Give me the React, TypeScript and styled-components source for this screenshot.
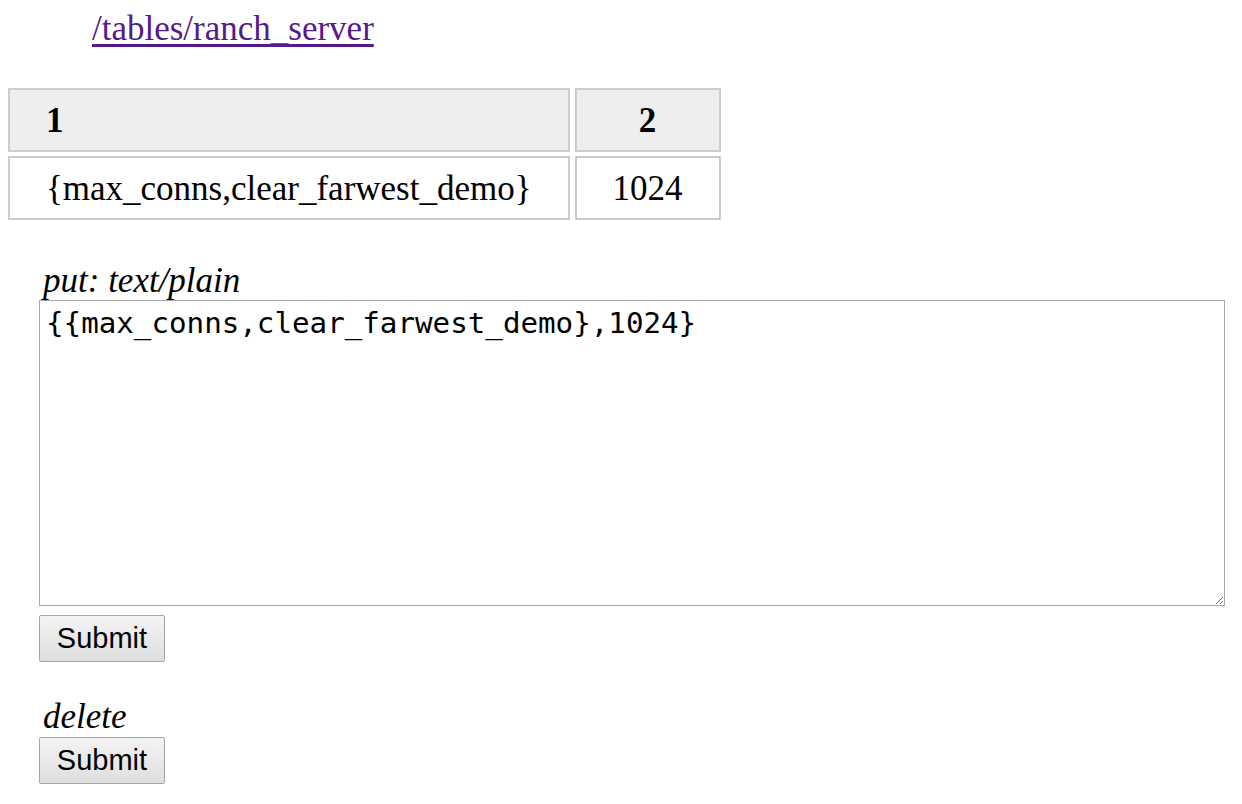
import styled, { createGlobalStyle } from 'styled-components';

const GlobalStyle = createGlobalStyle`
  html, body {
    margin: 0;
    padding: 0;
    background: #fff;
  }
  body {
    font-family: "Liberation Serif", "Times New Roman", serif;
    font-size: 35px;
    color: #000;
  }
`;

const Page = styled.div`
  display: flex;
  flex-direction: column;
  padding: 9px 0 0 0;
`;

const PathLine = styled.div`
  padding-left: 92px;
  line-height: 40px;
  margin-bottom: 35px;
`;

const PathLink = styled.a`
  color: #551a8b;
  text-decoration: underline;
  text-underline-offset: 4px;
`;

const DataTable = styled.table`
  border-collapse: separate;
  border-spacing: 5px 4px;
  margin: 0 0 0 3px;
  align-self: flex-start;
`;

const HeadCell = styled.th<{ $align: 'left' | 'center' }>`
  background: #eeeeee;
  border: 2px solid #cccccc;
  padding: 11px 36px 9px;
  line-height: 40px;
  font-weight: bold;
  text-align: ${(p) => p.$align};
`;

const BodyCell = styled.td<{ $align: 'left' | 'center' }>`
  border: 2px solid #cccccc;
  padding: 11px 36px 9px;
  line-height: 40px;
  text-align: ${(p) => p.$align};
`;

const Form = styled.form`
  display: flex;
  flex-direction: column;
  align-items: flex-start;
  padding-left: 39px;
`;

const MethodLabel = styled.div<{ $gap: number; $drop: number }>`
  font-style: italic;
  height: 40px;
  line-height: ${(p) => 40 + p.$drop * 2}px;
  padding-left: 4px;
  margin-top: ${(p) => p.$gap}px;
`;

const Body = styled.textarea`
  display: block;
  box-sizing: border-box;
  width: 1186px;
  height: 306px;
  margin-top: 1px;
  padding: 5px 6px 4px;
  border: 1px solid #a9a9a9;
  font-family: "DejaVu Sans Mono", "Liberation Mono", monospace;
  font-size: 29.2px;
  line-height: 34px;
  color: #000;
  background: #fff;
  resize: both;
  outline: none;
`;

const SubmitButton = styled.button<{ $gap: number }>`
  box-sizing: border-box;
  width: 126px;
  height: 47px;
  margin-top: ${(p) => p.$gap}px;
  padding: 0;
  border: 1px solid #a6a6a6;
  border-radius: 2px;
  background: linear-gradient(#f4f4f4, #dedede);
  font-family: "Liberation Sans", Arial, sans-serif;
  font-size: 29px;
  color: #000;
`;

export default function App() {
  return (
    <>
      <GlobalStyle />
      <Page>
        <PathLine>
          <PathLink href="#">/tables/ranch_server</PathLink>
        </PathLine>
        <DataTable>
          <thead>
            <tr>
              <HeadCell $align="left">1</HeadCell>
              <HeadCell $align="center">2</HeadCell>
            </tr>
          </thead>
          <tbody>
            <tr>
              <BodyCell $align="left">{'{max_conns,clear_farwest_demo}'}</BodyCell>
              <BodyCell $align="center">1024</BodyCell>
            </tr>
          </tbody>
        </DataTable>
        <Form onSubmit={(e) => e.preventDefault()}>
          <MethodLabel $gap={35} $drop={2}>put: text/plain</MethodLabel>
          <Body defaultValue="{{max_conns,clear_farwest_demo},1024}" spellCheck={false} />
          <SubmitButton type="submit" $gap={9}>
            Submit
          </SubmitButton>
          <MethodLabel $gap={34} $drop={1}>delete</MethodLabel>
          <SubmitButton type="submit" $gap={1}>
            Submit
          </SubmitButton>
        </Form>
      </Page>
    </>
  );
}
